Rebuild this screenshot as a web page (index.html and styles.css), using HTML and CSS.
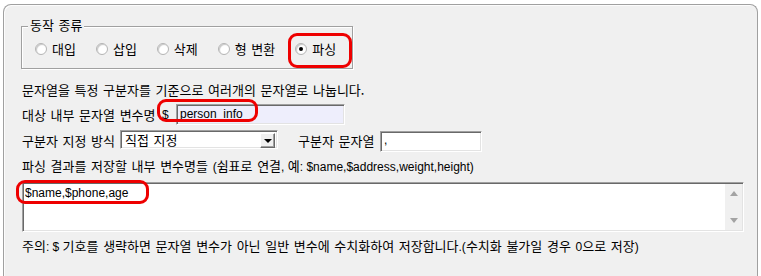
FILE: index.html
```html
<!DOCTYPE html>
<html lang="ko">
<head>
<meta charset="utf-8">
<title>동작 종류</title>
<link rel="stylesheet" href="styles.css">
</head>
<body>
<div class="panel">
  <div class="group">
    <span class="legend">동작 종류</span>
    <div class="radios">
      <div class="radio"><span class="circle"></span><span class="rlabel">대입</span></div>
      <div class="radio"><span class="circle"></span><span class="rlabel">삽입</span></div>
      <div class="radio"><span class="circle"></span><span class="rlabel">삭제</span></div>
      <div class="radio"><span class="circle"></span><span class="rlabel">형 변환</span></div>
      <div class="radio checked marked"><span class="circle"></span><span class="rlabel">파싱</span></div>
    </div>
  </div>

  <div class="line desc">문자열을 특정 구분자를 기준으로 여러개의 문자열로 나눕니다.</div>

  <div class="row row-var">
    <span class="label label-var">대상 내부 문자열 변수명</span>
    <span class="dollar en">$</span>
    <span class="field var-field en">person_info</span>
    <span class="ring ring-var"></span>
  </div>

  <div class="row row-sep">
    <span class="label label-mode">구분자 지정 방식</span>
    <div class="select">
      <span class="select-text">직접 지정</span>
      <span class="select-btn"><span class="tri-down"></span></span>
    </div>
    <span class="label sep-label">구분자 문자열</span>
    <span class="field sep-field en">,</span>
  </div>

  <div class="line result-label">파싱 결과를 저장할 내부 변수명들 <span class="en">(</span>쉼표로 연결<span class="en">, </span>예<span class="en">: $name,$address,weight,height)</span></div>

  <div class="textarea">
    <div class="ta-text en">$name,$phone,age</div>
    <div class="scroll">
      <span class="arrow-up"></span>
      <span class="arrow-down"></span>
    </div>
    <span class="ring ring-ta"></span>
  </div>

  <div class="line note">주의<span class="en">: $ </span>기호를 생략하면 문자열 변수가 아닌 일반 변수에 수치화하여 저장합니다<span class="en">.(</span>수치화 불가일 경우 <span class="en">0</span>으로 저장<span class="en">)</span></div>
</div>
</body>
</html>
```

FILE: styles.css
```css
* {
  box-sizing: border-box;
}

html, body {
  margin: 0;
  padding: 0;
  background: #ffffff;
  overflow: hidden;
}

body {
  font-family: "Noto Sans CJK KR", "Liberation Sans", sans-serif;
  font-size: 13px;
  line-height: 16px;
  word-spacing: 1px;
  color: #000000;
}

.en {
  font-family: "Liberation Sans", "Noto Sans CJK KR", sans-serif;
  font-size: 12px;
  word-spacing: 0;
}

.panel {
  margin: 4px 0 0 3px;
  width: 755px;
  height: 272px;
  background: #f0f0f0;
  border: 1px solid #a0a0a0;
  border-bottom: none;
  border-radius: 8px 8px 0 0;
  box-shadow: inset 1px 1px 0 #fcfcfc;
  padding: 21px 0 0 18px;
}

/* group box */
.group {
  position: relative;
  margin-left: -1px;
  width: 332px;
  height: 43px;
  border: 1px solid #a0a0a0;
  box-shadow: 1px 1px 0 #ffffff, inset 1px 1px 0 #ffffff;
}

.legend {
  position: absolute;
  left: 6px;
  top: -10px;
  padding: 0 2px;
  background: #f0f0f0;
  line-height: 16px;
}

.radios {
  display: flex;
  align-items: center;
  gap: 20px;
  height: 41px;
  padding: 2px 0 0 13px;
}

.radio {
  position: relative;
  display: flex;
  align-items: center;
  height: 16px;
}

.circle {
  width: 12px;
  height: 12px;
  border-radius: 50%;
  background: #ffffff;
  border: 1px solid #b4b4b4;
  box-shadow: inset 1px 1px 1px #c8c8c8;
  display: flex;
  align-items: center;
  justify-content: center;
}

.checked .circle::after {
  content: "";
  width: 4px;
  height: 4px;
  border-radius: 50%;
  background: #000000;
}

.rlabel {
  margin-left: 5px;
}

/* red highlight rings */
.ring {
  position: absolute;
  border: 3px solid #ee0000;
  border-radius: 9px;
  pointer-events: none;
}

.marked::before {
  content: "";
  position: absolute;
  left: -7px;
  top: -8px;
  width: 58px;
  height: 29px;
  border: 3px solid #ee0000;
  border-radius: 9px;
}

.line {
  height: 16px;
  white-space: nowrap;
}

.desc {
  margin-top: 13px;
}

.row {
  position: relative;
  display: flex;
  align-items: center;
  white-space: nowrap;
}

.row-var {
  margin-top: 6px;
  height: 21px;
}

.label-var {
  width: 140px;
}

.dollar {
  width: 7px;
}

.field {
  height: 21px;
  line-height: 19px;
  padding-left: 3px;
  border: 1px solid;
  border-color: #a0a0a0 #ffffff #ffffff #a0a0a0;
  box-shadow: inset 1px 1px 0 #696969, inset -1px -1px 0 #e3e3e3;
}

.var-field {
  margin-left: 7px;
  width: 169px;
  background: #eeeefc;
}

.ring-var {
  left: 135px;
  top: -5px;
  width: 101px;
  height: 23px;
}

.row-sep {
  margin-top: 5px;
  height: 22px;
  align-items: flex-start;
}

.row-sep .label {
  line-height: 19px;
  margin-top: 1px;
}

.label-mode {
  width: 98px;
}

.select {
  width: 158px;
  height: 19px;
  display: flex;
  background: #ffffff;
  border: 1px solid;
  border-color: #a0a0a0 #ffffff #ffffff #a0a0a0;
  box-shadow: inset 1px 1px 0 #696969, inset -1px -1px 0 #e3e3e3;
  padding: 2px 2px 2px 2px;
}

.select-text {
  flex: 1;
  line-height: 14px;
  padding-left: 2px;
}

.select-btn {
  width: 15px;
  height: 15px;
  background: #f0f0f0;
  border: 1px solid;
  border-color: #ffffff #696969 #696969 #ffffff;
  box-shadow: inset -1px -1px 0 #a0a0a0;
  display: flex;
  align-items: center;
  justify-content: center;
}

.tri-down {
  width: 0;
  height: 0;
  border-left: 4px solid transparent;
  border-right: 4px solid transparent;
  border-top: 4px solid #000000;
}

.sep-label {
  margin-left: 20px;
  width: 82px;
}

.sep-field {
  margin-top: 1px;
  width: 102px;
  background: #ffffff;
  line-height: 17px;
}

.result-label {
  margin-top: 6px;
}

.textarea {
  position: relative;
  margin-top: 8px;
  width: 722px;
  height: 50px;
  display: flex;
  background: #ffffff;
  border: 1px solid;
  border-color: #a0a0a0 #ffffff #ffffff #a0a0a0;
  box-shadow: inset 1px 1px 0 #696969, inset -1px -1px 0 #e3e3e3;
  padding: 1px 1px 1px 1px;
}

.ta-text {
  flex: 1;
  padding-left: 1px;
  line-height: 18px;
}

.scroll {
  width: 17px;
  background: #f0f0f0;
  display: flex;
  flex-direction: column;
  align-items: center;
  justify-content: space-between;
  padding: 7px 0 7px 0;
}

.arrow-up {
  width: 0;
  height: 0;
  border-left: 4px solid transparent;
  border-right: 4px solid transparent;
  border-bottom: 5px solid #a3a3a3;
}

.arrow-down {
  width: 0;
  height: 0;
  border-left: 4px solid transparent;
  border-right: 4px solid transparent;
  border-top: 5px solid #a3a3a3;
}

.ring-ta {
  left: -7px;
  top: -3px;
  width: 133px;
  height: 24px;
}

.note {
  margin-top: 6px;
}
```
